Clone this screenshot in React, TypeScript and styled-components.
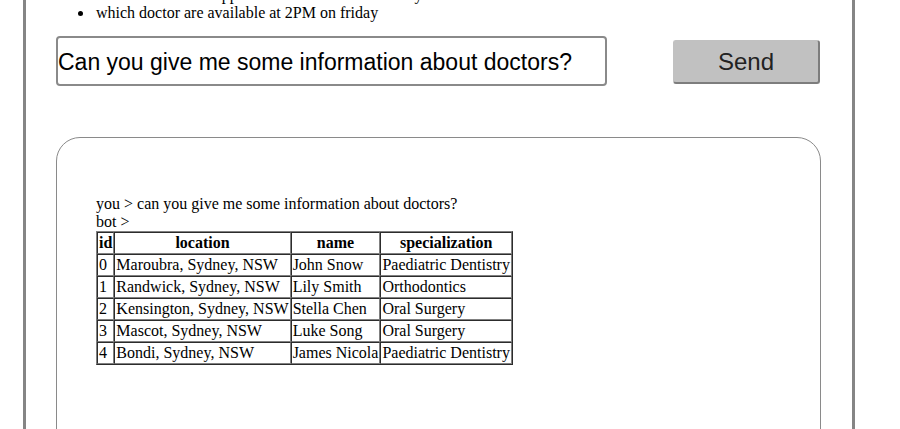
import React from "react";
import styled, { createGlobalStyle } from "styled-components";

const Global = createGlobalStyle`
  html, body { margin: 0; padding: 0; background: #fff; overflow: hidden; }
  body { font-family: "Liberation Serif", "Times New Roman", serif; font-size: 16px; color: #000; }
`;

const Page = styled.div`
  padding: 0 45px 0 23px;
  margin-top: -14px;
`;

const Frame = styled.div`
  border-left: 3px solid #858585;
  border-right: 3px solid #858585;
  padding: 0 31px 0 30px;
  min-height: 460px;
`;

const Hints = styled.ul`
  margin: 0;
  padding-left: 38px;
  line-height: 18px;
`;

const Hint = styled.li`
  font-size: 16px;
  padding-left: 2px;
`;

const InputRow = styled.div`
  display: flex;
  align-items: flex-start;
  margin-top: 14px;
  gap: 66px;
`;

const Question = styled.input`
  box-sizing: border-box;
  width: 551px;
  height: 50px;
  border: 2px solid #8a8a8a;
  border-radius: 4px;
  padding: 2px 0 0 0;
  font-family: "Liberation Sans", Arial, sans-serif;
  font-size: 23px;
  color: #000;
  outline: none;
`;

const SendButton = styled.button`
  box-sizing: border-box;
  margin-top: 4px;
  width: 147px;
  height: 44px;
  background: #c1c1c1;
  border: 1px solid #c1c1c1;
  border-right: 2px solid #7d7d7d;
  border-bottom: 2px solid #7d7d7d;
  border-radius: 3px;
  font-family: "Liberation Sans", Arial, sans-serif;
  font-size: 24px;
  color: #222;
  padding: 0;
`;

const ChatBox = styled.div`
  box-sizing: border-box;
  margin-top: 51px;
  width: 765px;
  height: 340px;
  border: 1px solid #8a8a8a;
  border-radius: 24px;
  padding: 57px 39px 0 39px;
`;

const Line = styled.div`
  line-height: 18px;
`;

const Table = styled.table`
  border: 1px outset #808080;
  border-spacing: 0;
  font-size: 16px;
`;

const Th = styled.th`
  border: 1px inset #808080;
  padding: 1px;
  line-height: 18px;
`;

const Td = styled.td`
  border: 1px inset #808080;
  padding: 1px;
  line-height: 18px;
`;

const doctors = [
  ["0", "Maroubra, Sydney, NSW", "John Snow", "Paediatric Dentistry"],
  ["1", "Randwick, Sydney, NSW", "Lily Smith", "Orthodontics"],
  ["2", "Kensington, Sydney, NSW", "Stella Chen", "Oral Surgery"],
  ["3", "Mascot, Sydney, NSW", "Luke Song", "Oral Surgery"],
  ["4", "Bondi, Sydney, NSW", "James Nicola", "Paediatric Dentistry"],
];

export default function App() {
  return (
    <>
      <Global />
      <Page>
        <Frame>
          <Hints>
            <Hint>how do I make an appointment with a doctor today</Hint>
            <Hint>which doctor are available at 2PM on friday</Hint>
          </Hints>
          <InputRow>
            <Question defaultValue="Can you give me some information about doctors?" />
            <SendButton>Send</SendButton>
          </InputRow>
          <ChatBox>
            <Line>you &gt; can you give me some information about doctors?</Line>
            <Line>bot &gt;</Line>
            <Table>
              <thead>
                <tr>
                  <Th>id</Th>
                  <Th>location</Th>
                  <Th>name</Th>
                  <Th>specialization</Th>
                </tr>
              </thead>
              <tbody>
                {doctors.map((d) => (
                  <tr key={d[0]}>
                    {d.map((c, i) => (
                      <Td key={i}>{c}</Td>
                    ))}
                  </tr>
                ))}
              </tbody>
            </Table>
          </ChatBox>
        </Frame>
      </Page>
    </>
  );
}
